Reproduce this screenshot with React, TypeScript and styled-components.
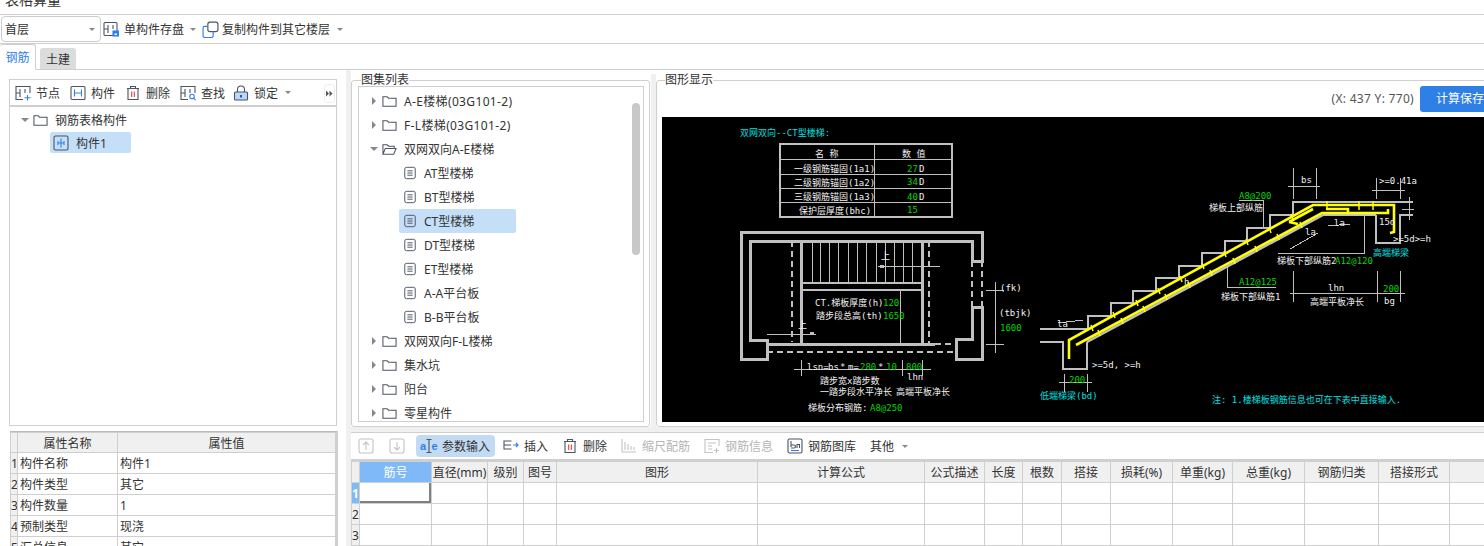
import React from 'react';
import styled, { createGlobalStyle } from 'styled-components';

const FONT = '"Noto Sans", "Noto Sans CJK SC", sans-serif';
const LINE = '#cfcfcf';

const GlobalStyle = createGlobalStyle`
  html, body {
    margin: 0;
    height: 546px;
    overflow: hidden;
    background: #fff;
  }
  body {
    font-family: ${FONT};
    font-size: 12px;
    color: #333;
  }
  * { box-sizing: border-box; }
`;

const Page = styled.div`
  width: 1484px;
  height: 546px;
  overflow: hidden;
  display: flex;
  flex-direction: column;
`;

const TitleBar = styled.div`
  height: 15px;
  flex: none;
  overflow: hidden;
  border-bottom: 1px solid ${LINE};
  padding-left: 5px;
  font-size: 14px;
  line-height: 14px;
  & > span { display: block; margin-top: -7px; }
`;

const TopToolbar = styled.div`
  height: 29px;
  flex: none;
  display: flex;
  align-items: center;
  padding-left: 1px;
  border-bottom: 1px solid ${LINE};
`;

const FloorSelect = styled.div`
  width: 100px;
  height: 26px;
  border: 1px solid #ccc;
  border-radius: 4px;
  display: flex;
  align-items: center;
  justify-content: space-between;
  padding: 0 5px 0 3px;
  margin-right: 2px;
`;

const Caret = styled.i<{ $gap?: number }>`
  display: inline-block;
  width: 0;
  height: 0;
  margin-left: ${({ $gap }) => $gap ?? 0}px;
  border-left: 3px solid transparent;
  border-right: 3px solid transparent;
  border-top: 3px solid #888;
`;

const ToolItem = styled.div<{ $gap?: number; $after?: number; $active?: boolean; $off?: boolean }>`
  display: flex;
  align-items: center;
  gap: ${({ $gap }) => $gap ?? 5}px;
  margin-right: ${({ $after }) => $after ?? 0}px;
  white-space: nowrap;
  color: ${({ $off }) => ($off ? '#b5b5b5' : '#333')};
  ${({ $active }) => $active && 'background: #c3daf3; border-radius: 4px; height: 22px; padding: 0 5px 0 3px;'}
`;

const TabStrip = styled.div`
  height: 26px;
  flex: none;
  display: flex;
  align-items: flex-end;
  border-bottom: 1px solid ${LINE};
`;

const Tab = styled.div<{ $active?: boolean }>`
  height: ${({ $active }) => ($active ? 26 : 21)}px;
  width: 36px;
  margin-right: 4px;
  margin-bottom: ${({ $active }) => ($active ? -1 : 0)}px;
  display: flex;
  align-items: center;
  justify-content: center;
  border-radius: 3px 3px 0 0;
  color: ${({ $active }) => ($active ? '#2f80ed' : '#333')};
  background: ${({ $active }) => ($active ? '#fff' : '#dcdcdc')};
  border: ${({ $active }) => ($active ? `1px solid ${LINE}` : 'none')};
  border-bottom: ${({ $active }) => ($active ? '1px solid #fff' : 'none')};
  border-left: none;
`;

const Body = styled.div`
  flex: 1;
  min-height: 0;
  display: flex;
`;

const LeftColumn = styled.div`
  width: 346px;
  flex: none;
  padding: 9px 9px 0 9px;
  display: flex;
  flex-direction: column;
`;

const Band = styled.div<{ $before?: number }>`
  width: 5px;
  flex: none;
  margin-left: ${({ $before }) => $before ?? 0}px;
  background: #f0f0f0;
`;

const TreePanel = styled.div`
  height: 347px;
  flex: none;
  border: 1px solid ${LINE};
`;

const PanelToolbar = styled.div`
  height: 27px;
  display: flex;
  align-items: center;
  padding-left: 5px;
  border-bottom: 2px solid ${LINE};
  position: relative;
`;

const MoreButton = styled.div`
  position: absolute;
  right: 1px;
  top: 4px;
  width: 11px;
  height: 19px;
  border: 1px solid #eee;
  border-radius: 3px;
  display: flex;
  align-items: center;
  justify-content: center;
`;

const TreeRow = styled.div<{
  $indent: number;
  $selected?: boolean;
  $width?: number;
  $height?: number;
  $pad?: number;
  $wide?: boolean;
}>`
  height: ${({ $height }) => $height ?? 24}px;
  margin-left: ${({ $indent }) => $indent}px;
  padding-left: ${({ $pad }) => $pad ?? 0}px;
  width: ${({ $width }) => ($width ? `${$width}px` : 'auto')};
  display: flex;
  align-items: center;
  gap: 7px;
  white-space: nowrap;
  border-radius: 2px;
  letter-spacing: ${({ $wide }) => ($wide ? '0.35px' : 'normal')};
  background: ${({ $selected }) => ($selected ? '#c6dff9' : 'transparent')};
`;

const Arrow = styled.i<{ $open?: boolean }>`
  display: inline-block;
  width: 0;
  height: 0;
  ${({ $open }) =>
    $open
      ? 'border-left: 4px solid transparent; border-right: 4px solid transparent; border-top: 4px solid #888; margin-right: -3px;'
      : 'border-top: 4px solid transparent; border-bottom: 4px solid transparent; border-left: 4px solid #888; margin-left: 2px; margin-right: -1px;'}
`;

const LeftTree = styled.div`
  padding-top: 1px;
`;

const Grid = styled.table<{ $width: number }>`
  width: ${({ $width }) => $width}px;
  table-layout: fixed;
  border-collapse: collapse;
  font-size: 12px;
  & td, & th {
    border: 1px solid ${LINE};
    height: 21px;
    padding: 0;
    font-weight: 400;
    overflow: hidden;
    white-space: nowrap;
  }
`;

const HeadCell = styled.th<{ $active?: boolean; $short?: boolean }>`
  text-align: center;
  background: ${({ $active }) => ($active ? '#7fb9f7' : '#f0f0f0')};
  color: ${({ $active }) => ($active ? '#fff' : '#333')};
  ${({ $short }) => $short && 'height: 20px !important;'}
`;

const IndexCell = styled.td<{ $active?: boolean }>`
  background: ${({ $active }) => ($active ? '#7fb9f7' : '#f0f0f0')};
  color: ${({ $active }) => ($active ? '#fff' : '#333')};
  text-align: center;
  font-weight: ${({ $active }) => ($active ? 700 : 400)} !important;
`;

const ValueCell = styled.td<{ $current?: boolean }>`
  padding-left: 2px !important;
  ${({ $current }) => $current && 'box-shadow: inset -2px -2px 0 #808080;'}
`;

const PropsWrap = styled.div`
  margin-top: 5px;
  margin-left: 1px;
  width: 328px;
  border-top: 1px solid #bbb;
  border-right: 2px solid ${LINE};
  overflow: hidden;
`;

const WorkArea = styled.div`
  flex: 1;
  min-width: 0;
  display: flex;
  flex-direction: column;
`;

const TopPanes = styled.div`
  height: 357px;
  flex: none;
  display: flex;
  padding-top: 4px;
  overflow: hidden;
`;

const Frame = styled.fieldset<{ $width: number; $pad: number }>`
  margin: 0;
  padding: 0 5px 4px ${({ $pad }) => $pad}px;
  min-width: 0;
  border: 1px solid ${LINE};
  border-radius: 3px;
  width: ${({ $width }) => $width}px;
  flex: none;
  overflow: hidden;
`;

const FrameTitle = styled.legend`
  padding: 0;
  margin-left: 3px;
  line-height: 12px;
  font-size: 12px;
`;

const ListBox = styled.div`
  height: 336px;
  margin-top: 0;
  border: 1px solid ${LINE};
  padding-top: 2px;
  position: relative;
  overflow: hidden;
`;

const ScrollThumb = styled.div`
  position: absolute;
  right: 3px;
  top: 16px;
  width: 8px;
  height: 152px;
  border-radius: 4px;
  background: #c8c8c8;
`;

const CoordRow = styled.div`
  height: 31px;
  display: flex;
  align-items: flex-start;
  justify-content: flex-end;
  gap: 6px;
  margin-right: -14px;
`;

const Coord = styled.span`
  color: #555;
  line-height: 26px;
  letter-spacing: 0.3px;
`;

const SaveButton = styled.div`
  width: 80px;
  height: 26px;
  margin-top: 0;
  background: #2e7fe6;
  color: #fff;
  border-radius: 3px;
  padding-left: 16px;
  line-height: 26px;
`;

const Splitter = styled.div`
  height: 6px;
  flex: none;
  background: #f0f0f0;
  border-bottom: 1px solid ${LINE};
`;

const TableToolbar = styled.div`
  height: 28px;
  flex: none;
  display: flex;
  align-items: center;
  padding-left: 7px;
  border-bottom: 2px solid ${LINE};
`;

const Canvas = styled.svg`
  display: block;
  width: 822px;
  height: 305px;
  background: #000;
  shape-rendering: crispEdges;
`;

const CadLabel = styled.text`
  font-family: "DejaVu Sans Mono", "Noto Sans CJK SC", monospace;
  font-size: 9px;
  shape-rendering: auto;
`;

const IconSvg = styled.svg<{ $off?: boolean }>`
  flex: none;
  display: block;
  fill: none;
  stroke: ${({ $off }) => ($off ? '#c4c4c4' : '#4b5563')};
  stroke-width: 1.1;
`;

const IconLetter = styled.text`
  font-family: "Liberation Sans", sans-serif;
  font-size: 11px;
  font-weight: 700;
  fill: #2f80ed;
  stroke: none;
`;

const Icon: React.FC<{ size?: number; off?: boolean; children: React.ReactNode }> = ({ size = 16, off, children }) => (
  <IconSvg width={size} height={size} viewBox="0 0 16 16" $off={off}>
    {children}
  </IconSvg>
);

const BLUE = '#2f80ed';

const SaveIcon = () => (
  <Icon>
    <rect x="1" y="1.5" width="13" height="13" rx="1" />
    <path d="M1 8h4M5 4v8M10 4v4" />
    <rect x="10" y="10" width="5.5" height="5" fill={BLUE} stroke={BLUE} />
    <rect x="11.5" y="12.5" width="2.5" height="1.5" fill="#fff" stroke="none" />
  </Icon>
);
const CopyIcon = () => (
  <Icon size={17}>
    <rect x="5.5" y="1" width="9.5" height="9" rx="2" />
    <path d="M5.5 5H2.5a1.5 1.5 0 0 0-1.5 1.5V14a1.5 1.5 0 0 0 1.5 1.5H9A1.5 1.5 0 0 0 10.5 14v-4" stroke={BLUE} />
  </Icon>
);
const NodeIcon = () => (
  <Icon>
    <path d="M15 8V1.5H1v13h7M1 8h4M5 4v8M10 4v4" />
    <path d="M12.5 10v5.5M9.5 12.8h6" stroke={BLUE} />
  </Icon>
);
const PartIcon = () => (
  <Icon>
    <rect x="1" y="1.5" width="14" height="13" rx="1" />
    <path d="M4.5 4.5v7M11.5 4.5v7M4.5 8h7" stroke={BLUE} />
  </Icon>
);
const TrashIcon = () => (
  <Icon>
    <path d="M2 3.5h12M5.5 3.5V1.5h5v2M3 3.5v11h10v-11" />
    <path d="M6.7 6.5v5.5M9.3 6.5v5.5" stroke="#e53935" />
  </Icon>
);
const FindIcon = () => (
  <Icon>
    <path d="M15 8V1.5H1v13h7M1 8h4M5 4v8M10 4v4" />
    <circle cx="12" cy="11.5" r="2.3" stroke={BLUE} />
    <path d="M13.7 13.2l2 2" stroke={BLUE} />
  </Icon>
);
const LockIcon = () => (
  <Icon>
    <path d="M4.5 7V4.5a3.5 3.5 0 0 1 7 0V7" />
    <rect x="1.5" y="7" width="13" height="8" rx="1" fill="#bcd7f7" />
    <path d="M8 10v2.5" stroke="#1f5fbf" strokeWidth="2" />
  </Icon>
);
const FolderIcon = ({ open }: { open?: boolean }) => (
  <Icon size={15}>
    {open ? (
      <path d="M1 13V3h4.5l1.5 1.5h6v2.5M1 13l2.5-6H15l-2.5 6z" />
    ) : (
      <path d="M1 13V3h4.5l1.5 1.5h8V13z" />
    )}
  </Icon>
);
const DocIcon = () => (
  <Icon size={14}>
    <rect x="2" y="1.5" width="12" height="13" rx="2" />
    <path d="M5 5.5h6M5 8h6M5 10.5h6" />
  </Icon>
);
const MemberIcon = () => (
  <Icon>
    <rect x="1" y="1" width="14" height="14" rx="1.5" />
    <path d="M8 3.5v9M5 6v4M11 6v4M5 8h6" stroke={BLUE} />
  </Icon>
);
const UpIcon = () => (
  <Icon off>
    <rect x="1" y="1" width="14" height="14" rx="2" />
    <path d="M8 12V4M5 7l3-3 3 3" />
  </Icon>
);
const DownIcon = () => (
  <Icon off>
    <rect x="1" y="1" width="14" height="14" rx="2" />
    <path d="M8 4v8M5 9l3 3 3-3" />
  </Icon>
);
const ParamIcon = () => (
  <IconSvg width={20} height={16} viewBox="0 0 20 16">
    <path d="M7.5 1.5h5M7.5 14.5h5M10 1.5v13" />
    <IconLetter x="1" y="12">a</IconLetter>
    <IconLetter x="12.5" y="12">e</IconLetter>
  </IconSvg>
);
const InsertIcon = () => (
  <Icon>
    <path d="M8.5 3H1v8h7.5M1 7h7" />
    <path d="M10 7h5M13 5l2 2-2 2" stroke={BLUE} />
  </Icon>
);
const ScaleIcon = () => (
  <Icon off>
    <path d="M1 1v13h14M4 4v8M7 6v6M10 8v4M13 9v3" />
  </Icon>
);
const InfoIcon = () => (
  <Icon off>
    <path d="M15 8V1.5H1v13h8M4 5h8M4 8h4M4 11h4" />
    <path d="M12.5 10v5M10 12.5h5" />
  </Icon>
);
const LibraryIcon = () => (
  <Icon>
    <rect x="1" y="1" width="14" height="14" rx="1.5" />
    <path d="M4 3v6M4 7h3a1.5 1.5 0 0 1 0 3H4M10 10V6.5h2.5V10" />
    <path d="M4 12.5h8" stroke={BLUE} />
  </Icon>
);
const DoubleArrow = () => (
  <svg width="7" height="7" viewBox="0 0 7 7">
    <path d="M0 0.5l3 3-3 3zM3.5 0.5l3 3-3 3z" fill="#555" />
  </svg>
);

const GREY = '#c0c0c0';
const GREEN = '#00d800';
const CYAN = '#00e0e0';
const WHITE = '#f0f0f0';
const YELLOW = '#ffff00';

// plan view and section are given in page pixels, the viewBox maps them onto the canvas
const wallLines = [
  'M741 232H982V261H972V241H750V340H767V359H741Z',
  'M982 307H972V339H956V359H982Z',
  'M801 241V344M922 241V344M767 344H935',
];
const thickLines = [
  'M780 144H952V217H780Z',
  'M801 283H922M801 290H922',
  'M1040 329H1088V316H1111V303H1133V291H1156V278H1179V266H1202V253H1225V241H1247V228H1270V215H1293V202H1413',
  'M1040 342H1063V369H1087V342',
  'M1376 215V243H1400V215H1413M1323 215H1376',
];
const thinLines = [
  'M780 159H952M780 174H952M780 188.5H952M780 202.5H952M874 144V217M900 290V344',
  'M878 266H940M767 334H816M794 369H931M801 360V376M902 360V376M922 360V376',
  'M995 282V353M986 290H1004M986 344H1004',
  'M1288 186H1320M1293 168V199M1316 168V199M1372 190H1405M1376 178V199M1400 178V199',
  'M1239 200H1263V228M1364 213V253H1278M1227 267V287H1276',
  'M1290 293H1405M1293 271V302M1377 271V302M1400 271V302',
  'M1059 382H1092M1064 374V392M1087 374V392M1409 197V220M1402 209H1414',
  'M1058 323L1083 320M1290 249L1318 233M1328 226L1350 224',
];
const dashedLines = ['M792 241V342M929 241V344M972 261V307M982 261V307M935 344H956M767 352H956'];
const yellowLines = [
  'M1069 359V340L1313 205H1394V232L1390 233',
  'M1076 345L1322 213H1388V209',
  'M1289 222L1313 209M1289 222L1298 224M1326 209H1348V213',
];

const barTicks = (x1: number, y1: number, x2: number, y2: number, count: number) => {
  const out: string[] = [];
  for (let i = 1; i <= count; i++) {
    const x = x1 + ((x2 - x1) * i) / (count + 1);
    const y = y1 + ((y2 - y1) * i) / (count + 1);
    out.push(`M${x.toFixed(0)} ${(y - 3).toFixed(0)}L${(x + 2).toFixed(0)} ${(y + 3).toFixed(0)}`);
  }
  return out.join('');
};

const treadLines = [812, 820, 829, 838, 848, 857, 866, 876, 885, 894, 903, 912];

type Label = [number, number, string, string];
const labels: Label[] = [
  [740, 136, '双网双向--CT型楼梯:', CYAN],
  [815, 157, '名   称', WHITE],
  [902, 157, '数   值', WHITE],
  [794, 172, '一级钢筋锚固(1a1)', WHITE],
  [794, 186, '二级钢筋锚固(1a2)', WHITE],
  [794, 200, '三级钢筋锚固(1a3)', WHITE],
  [799, 214, '保护层厚度(bhc)', WHITE],
  [907, 172, '27', GREEN],
  [919, 172, 'D', WHITE],
  [907, 185, '34', GREEN],
  [919, 185, 'D', WHITE],
  [907, 200, '40', GREEN],
  [919, 200, 'D', WHITE],
  [907, 213, '15', GREEN],
  [881, 259, '上', WHITE],
  [798, 328, '上', WHITE],
  [815, 306, 'CT.梯板厚度(h)', WHITE],
  [883, 306, '120', GREEN],
  [816, 319, '踏步段总高(th)', WHITE],
  [883, 319, '1650', GREEN],
  [807, 370, 'lsn=', WHITE],
  [828, 370, 'bs', WHITE],
  [840, 370, '*', WHITE],
  [848, 370, 'm=', WHITE],
  [860, 370, '280', GREEN],
  [878, 370, '*', WHITE],
  [886, 370, '10', GREEN],
  [906, 370, '800', GREEN],
  [907, 380, 'lhn', WHITE],
  [820, 384, '踏步宽x踏步数', WHITE],
  [820, 395, '一踏步段水平净长', WHITE],
  [896, 395, '高端平板净长', WHITE],
  [808, 411, '梯板分布钢筋:', WHITE],
  [870, 411, 'A8@250', GREEN],
  [1000, 291, '(fk)', WHITE],
  [999, 316, '(tbjk)', WHITE],
  [1000, 331, '1600', GREEN],
  [1301, 183, 'bs', WHITE],
  [1379, 184, '>=0.41a', WHITE],
  [1239, 199, 'A8@200', GREEN],
  [1209, 211, '梯板上部纵筋', WHITE],
  [1334, 226, 'la', WHITE],
  [1305, 235, 'la', WHITE],
  [1379, 225, '15d', WHITE],
  [1393, 242, '>=5d>=h', WHITE],
  [1373, 256, '高端梯梁', CYAN],
  [1277, 264, '梯板下部纵筋2', WHITE],
  [1335, 264, 'A12@120', GREEN],
  [1239, 285, 'A12@125', GREEN],
  [1184, 285, 'h', WHITE],
  [1221, 300, '梯板下部纵筋1', WHITE],
  [1328, 291, 'lhn', WHITE],
  [1383, 292, '200', GREEN],
  [1310, 305, '高端平板净长', WHITE],
  [1384, 304, 'bg', WHITE],
  [1057, 327, 'la', WHITE],
  [1092, 368, '>=5d, >=h', WHITE],
  [1069, 383, '200', GREEN],
  [1040, 399, '低端梯梁(bd)', CYAN],
  [1212, 403, '注: 1.楼梯板钢筋信息也可在下表中直接输入.', CYAN],
];

const StairDrawing: React.FC = () => (
  <Canvas viewBox="662 117 822 305">
    <g fill="none" stroke={GREY} strokeWidth="3">
      {wallLines.map((d) => (
        <path key={d} d={d} />
      ))}
    </g>
    <g fill="none" stroke={GREY} strokeWidth="2">
      {thickLines.map((d) => (
        <path key={d} d={d} />
      ))}
      <path d="M1087 342L1323 215" strokeWidth="2.5" style={{ shapeRendering: 'auto' }} />
      {dashedLines.map((d) => (
        <path key={d} d={d} strokeDasharray="6 4" />
      ))}
    </g>
    <g fill="none" stroke={GREY} strokeWidth="1">
      {thinLines.map((d) => (
        <path key={d} d={d} />
      ))}
      {treadLines.map((x) => (
        <path key={x} d={`M${x} 241V283`} />
      ))}
    </g>
    <path d="M880 265h4v3h-4zM810 332h4v3h-4z" fill={GREY} />
    <g fill="none" stroke={YELLOW} strokeWidth="2.6" style={{ shapeRendering: 'auto' }}>
      {yellowLines.map((d) => (
        <path key={d} d={d} />
      ))}
      <path d={barTicks(1069, 340, 1313, 205, 10)} strokeWidth="1.5" />
      <path d={barTicks(1076, 345, 1322, 213, 10)} strokeWidth="1.5" />
      <path d="M1327 201v9M1359 201v9M1373 201v9" strokeWidth="1.5" />
    </g>
    {labels.map(([x, y, text, color]) => (
      <CadLabel key={`${x}-${y}`} x={x} y={y} fill={color}>
        {text}
      </CadLabel>
    ))}
  </Canvas>
);

const setList: { name: string; kind: 'closed' | 'open' | 'doc'; selected?: boolean; wide?: boolean }[] = [
  { name: 'A-E楼梯(03G101-2)', kind: 'closed', wide: true },
  { name: 'F-L楼梯(03G101-2)', kind: 'closed', wide: true },
  { name: '双网双向A-E楼梯', kind: 'open' },
  { name: 'AT型楼梯', kind: 'doc' },
  { name: 'BT型楼梯', kind: 'doc' },
  { name: 'CT型楼梯', kind: 'doc', selected: true },
  { name: 'DT型楼梯', kind: 'doc' },
  { name: 'ET型楼梯', kind: 'doc' },
  { name: 'A-A平台板', kind: 'doc' },
  { name: 'B-B平台板', kind: 'doc' },
  { name: '双网双向F-L楼梯', kind: 'closed' },
  { name: '集水坑', kind: 'closed' },
  { name: '阳台', kind: 'closed' },
  { name: '零星构件', kind: 'closed' },
];

const properties = [
  ['构件名称', '构件1'],
  ['构件类型', '其它'],
  ['构件数量', '1'],
  ['预制类型', '现浇'],
  ['汇总信息', '其它'],
];

const rebarColumns: [string, number][] = [
  ['筋号', 72],
  ['直径(mm)', 56],
  ['级别', 36],
  ['图号', 33],
  ['图形', 201],
  ['计算公式', 167],
  ['公式描述', 60],
  ['长度', 38],
  ['根数', 39],
  ['搭接', 49],
  ['损耗(%)', 62],
  ['单重(kg)', 60],
  ['总重(kg)', 72],
  ['钢筋归类', 74],
  ['搭接形式', 71],
  ['', 35],
];

const App: React.FC = () => (
  <Page>
    <GlobalStyle />
    <TitleBar>
      <span>表格算量</span>
    </TitleBar>
    <TopToolbar>
      <FloorSelect>
        首层
        <Caret />
      </FloorSelect>
      <ToolItem $after={6}>
        <SaveIcon />
        单构件存盘
        <Caret $gap={1} />
      </ToolItem>
      <ToolItem $gap={3}>
        <CopyIcon />
        复制构件到其它楼层
        <Caret $gap={4} />
      </ToolItem>
    </TopToolbar>
    <TabStrip>
      <Tab $active>钢筋</Tab>
      <Tab>土建</Tab>
    </TabStrip>
    <Body>
      <LeftColumn>
        <TreePanel>
          <PanelToolbar>
            <ToolItem $after={10}>
              <NodeIcon />
              节点
            </ToolItem>
            <ToolItem $after={10}>
              <PartIcon />
              构件
            </ToolItem>
            <ToolItem $after={10}>
              <TrashIcon />
              删除
            </ToolItem>
            <ToolItem $after={8}>
              <FindIcon />
              查找
            </ToolItem>
            <ToolItem>
              <LockIcon />
              锁定
              <Caret $gap={2} />
            </ToolItem>
            <MoreButton>
              <DoubleArrow />
            </MoreButton>
          </PanelToolbar>
          <LeftTree>
            <TreeRow $indent={11}>
              <Arrow $open />
              <FolderIcon />
              钢筋表格构件
            </TreeRow>
            <TreeRow $indent={40} $pad={3} $selected $width={81} $height={21}>
              <MemberIcon />
              构件1
            </TreeRow>
          </LeftTree>
        </TreePanel>
        <PropsWrap>
          <Grid $width={326}>
            <colgroup>
              <col style={{ width: 7 }} />
              <col style={{ width: 100 }} />
              <col />
            </colgroup>
            <thead>
              <tr>
                <HeadCell $short />
                <HeadCell $short>属性名称</HeadCell>
                <HeadCell $short>属性值</HeadCell>
              </tr>
            </thead>
            <tbody>
              {properties.map(([name, value], i) => (
                <tr key={name}>
                  <IndexCell>{i + 1}</IndexCell>
                  <ValueCell>{name}</ValueCell>
                  <ValueCell>{value}</ValueCell>
                </tr>
              ))}
            </tbody>
          </Grid>
        </PropsWrap>
      </LeftColumn>
      <Band />
      <WorkArea>
        <TopPanes>
          <Frame $width={299} $pad={6}>
            <FrameTitle>图集列表</FrameTitle>
            <ListBox>
              {setList.map((item) =>
                item.kind === 'doc' ? (
                  <TreeRow key={item.name} $indent={40} $pad={4} $selected={item.selected} $width={117}>
                    <DocIcon />
                    {item.name}
                  </TreeRow>
                ) : (
                  <TreeRow key={item.name} $indent={11} $wide={item.wide}>
                    <Arrow $open={item.kind === 'open'} />
                    <FolderIcon open={item.kind === 'open'} />
                    {item.name}
                  </TreeRow>
                ),
              )}
              <ScrollThumb />
            </ListBox>
          </Frame>
          <Band $before={1} />
          <Frame $width={836} $pad={5}>
            <FrameTitle>图形显示</FrameTitle>
            <CoordRow>
              <Coord>(X: 437 Y: 770)</Coord>
              <SaveButton>计算保存</SaveButton>
            </CoordRow>
            <StairDrawing />
          </Frame>
        </TopPanes>
        <Splitter />
        <TableToolbar>
          <ToolItem $after={15}>
            <UpIcon />
          </ToolItem>
          <ToolItem $after={11}>
            <DownIcon />
          </ToolItem>
          <ToolItem $active $after={8} $gap={3}>
            <ParamIcon />
            参数输入
          </ToolItem>
          <ToolItem $after={14}>
            <InsertIcon />
            插入
          </ToolItem>
          <ToolItem $after={14}>
            <TrashIcon />
            删除
          </ToolItem>
          <ToolItem $after={14} $off>
            <ScaleIcon />
            缩尺配筋
          </ToolItem>
          <ToolItem $after={14} $off>
            <InfoIcon />
            钢筋信息
          </ToolItem>
          <ToolItem $after={14}>
            <LibraryIcon />
            钢筋图库
          </ToolItem>
          <ToolItem>
            其他
            <Caret $gap={3} />
          </ToolItem>
        </TableToolbar>
        <Grid $width={1133}>
          <colgroup>
            <col style={{ width: 8 }} />
            {rebarColumns.map(([title, width]) => (
              <col key={title + width} style={{ width }} />
            ))}
          </colgroup>
          <thead>
            <tr>
              <HeadCell />
              {rebarColumns.map(([title], i) => (
                <HeadCell key={title + i} $active={i === 0}>
                  {title}
                </HeadCell>
              ))}
            </tr>
          </thead>
          <tbody>
            {[1, 2, 3].map((row) => (
              <tr key={row}>
                <IndexCell $active={row === 1}>{row}</IndexCell>
                {rebarColumns.map(([title], i) => (
                  <ValueCell key={title + i} $current={row === 1 && i === 0} />
                ))}
              </tr>
            ))}
          </tbody>
        </Grid>
      </WorkArea>
    </Body>
  </Page>
);

export default App;
